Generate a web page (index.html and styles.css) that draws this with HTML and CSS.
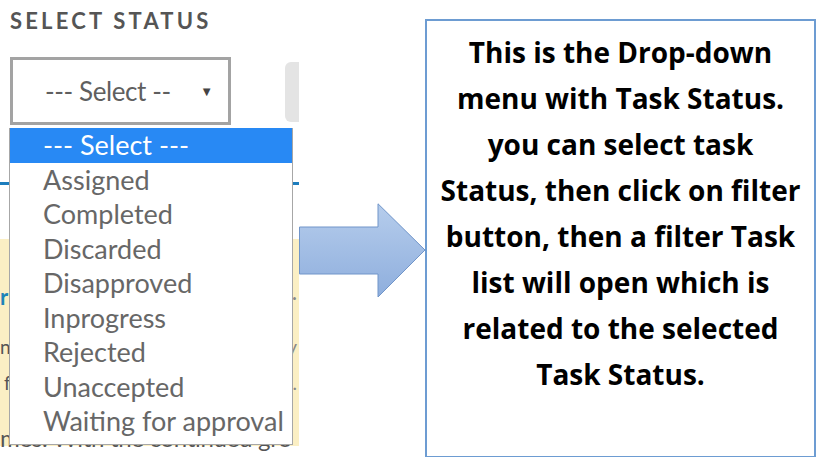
FILE: index.html
```html
<!DOCTYPE html>
<html>
<head>
<meta charset="utf-8">
<link rel="stylesheet" href="styles.css">
</head>
<body>
<div class="page">
  <div class="shot">
    <div class="label">SELECT STATUS</div>
    <div class="controls">
      <div class="select"><span class="select-text">--- Select --</span><span class="caret">▼</span></div>
      <div class="btn"></div>
    </div>
    <div class="tabline"></div>
    <div class="notice">
      <div class="nrow r1"><span class="teal">r</span><span class="frag">·</span></div>
      <div class="nrow r2"><span>ne</span><span class="frag">y</span></div>
      <div class="nrow r3"><span class="ind">f</span><span class="frag">.</span></div>
      <div class="nrow r4"><span>mes. With the continued gro</span></div>
    </div>
    <ul class="dropdown">
      <li class="sel">--- Select ---</li>
      <li>Assigned</li>
      <li>Completed</li>
      <li>Discarded</li>
      <li>Disapproved</li>
      <li>Inprogress</li>
      <li>Rejected</li>
      <li>Unaccepted</li>
      <li>Waiting for approval</li>
    </ul>
  </div>
  <svg class="arrow" width="128" height="96" viewBox="0 0 128 96">
    <defs>
      <linearGradient id="ag" x1="0" y1="0" x2="0" y2="1">
        <stop offset="0" stop-color="#b6cdec"/>
        <stop offset="1" stop-color="#8eaedd"/>
      </linearGradient>
    </defs>
    <polygon points="0.5,24 79,24 79,0.8 126,47 79,94 79,71 0.5,71" fill="url(#ag)" stroke="#7095c9" stroke-width="1"/>
  </svg>
  <div class="callout">
    This is the Drop-down menu with Task Status. you can select task Status, then click on filter button, then a filter Task list will open which is related to the selected Task Status.
  </div>
</div>
</body>
</html>
```

FILE: styles.css
```css
html, body {
  margin: 0;
  padding: 0;
  background: #ffffff;
}
.page {
  display: flex;
  align-items: flex-start;
  width: 823px;
  height: 457px;
  overflow: hidden;
}
.shot {
  position: relative;
  width: 299px;
  height: 457px;
  flex: none;
  overflow: hidden;
  font-family: Lato, "Open Sans", sans-serif;
}
.label {
  padding: 9px 0 0 10px;
  font-size: 22px;
  font-weight: 700;
  letter-spacing: 3.2px;
  color: #555555;
  line-height: 24px;
  white-space: nowrap;
}
.controls {
  display: flex;
  margin-top: 24px;
  gap: 54px;
}
.select {
  flex: none;
  margin-left: 10px;
  width: 215px;
  height: 62px;
  border: 3px solid #a3a3a3;
  display: flex;
  align-items: center;
  box-sizing: content-box;
}
.select-text {
  flex: 1;
  margin-left: 32px;
  font-size: 26px;
  color: #5f5f5f;
  letter-spacing: -0.4px;
  white-space: nowrap;
}
.caret {
  margin-right: 15px;
  font-size: 13px;
  color: #444;
}
.btn {
  flex: none;
  width: 40px;
  height: 60px;
  margin-top: 5px;
  background: #e4e4e4;
  border-radius: 6px;
}
.tabline {
  margin-top: 57px;
  height: 3px;
  background: #1c7dbd;
}
.notice {
  margin-top: 54px;
  height: 207px;
  background: #fbefc4;
  padding-top: 48px;
  box-sizing: border-box;
  font-size: 19px;
  color: #555;
}
.nrow {
  display: flex;
  justify-content: space-between;
  white-space: nowrap;
  line-height: 20px;
}
.r1 { height: 50px; }
.r2 { height: 36px; }
.r3 { height: 55px; }
.r4 { font-size: 24px; letter-spacing: -0.3px; }
.teal {
  color: #1f84b8;
  font-weight: 700;
  font-size: 22px;
}
.ind { padding-left: 4px; }
.frag { color: #888; padding-right: 2px; }
.dropdown {
  position: absolute;
  left: 9px;
  top: 128px;
  width: 282px;
  margin: 0;
  padding: 0 0 5px 0;
  list-style: none;
  background: #ffffff;
  border: 1px solid #a7a7a7;
  border-top: none;
  font-size: 27px;
  color: #676767;
}
.dropdown li {
  height: 34.5px;
  line-height: 34.5px;
  padding-left: 33px;
  white-space: nowrap;
}
.dropdown li.sel {
  background: #2889f4;
  color: #ffffff;
}
.arrow {
  flex: none;
  margin-top: 203px;
  display: block;
}
.callout {
  flex: none;
  margin-top: 19px;
  margin-left: -2px;
  width: 363px;
  height: 427px;
  border: 2px solid #6d9cd2;
  padding: 8px 12px 0 12px;
  font-family: "Open Sans", sans-serif;
  font-weight: 700;
  font-size: 28px;
  line-height: 46px;
  text-align: center;
  color: #000000;
}
```
